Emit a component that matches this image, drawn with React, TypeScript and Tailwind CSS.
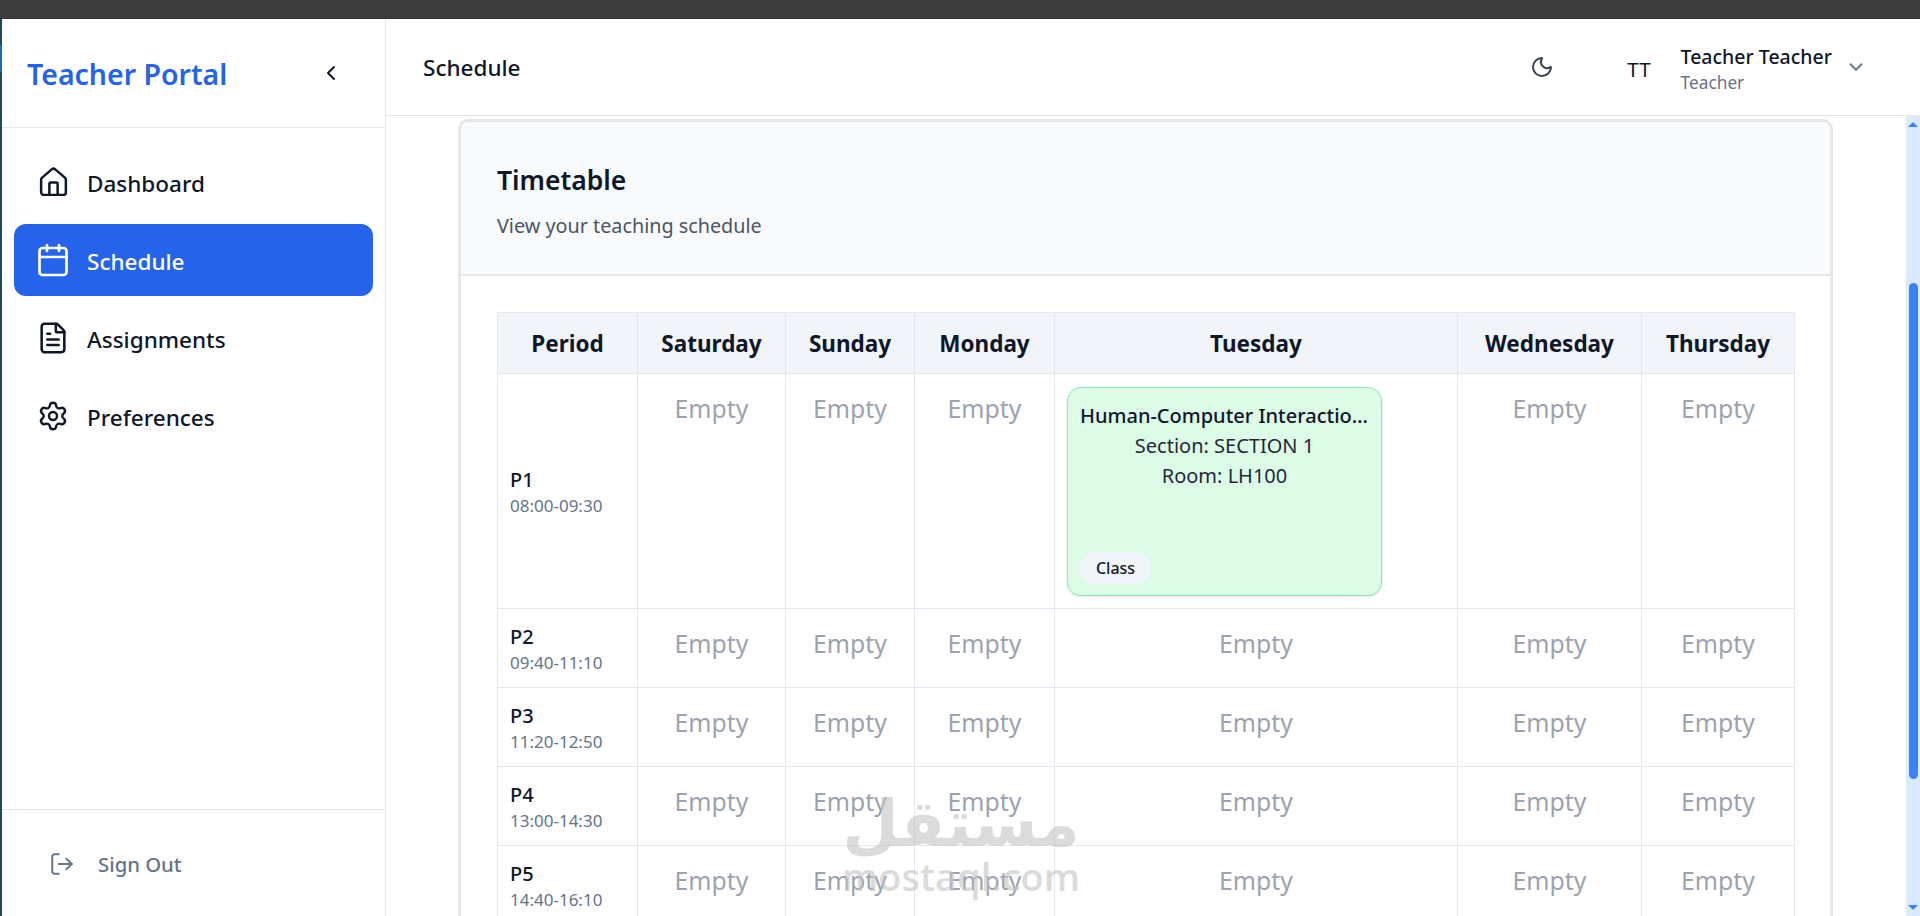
import { Calendar, ChevronDown, ChevronLeft, FileText, House, LogOut, Moon, Settings } from "lucide-react";

const days = ["Saturday", "Sunday", "Monday", "Tuesday", "Wednesday", "Thursday"];
const periods = [
  ["P2", "09:40-11:10"],
  ["P3", "11:20-12:50"],
  ["P4", "13:00-14:30"],
  ["P5", "14:40-16:10"],
  ["P6", "16:20-17:50"],
];
const nav = [
  { label: "Dashboard", Icon: House, size: 33 },
  { label: "Schedule", Icon: Calendar, size: 36, active: true },
  { label: "Assignments", Icon: FileText, size: 34 },
  { label: "Preferences", Icon: Settings, size: 32 },
];

function Empty() {
  return <div className="text-center text-[24.8px] leading-[32px] text-[#9ca3af]">Empty</div>;
}

function PeriodCell({ name, time }: { name: string; time: string }) {
  return (
    <td className="border border-[#e2e8f0] px-[12px] pt-[2px] align-middle">
      <div className="text-[20px] leading-[28px] font-medium text-[#0f172a]">{name}</div>
      <div className="text-[17px] leading-[24px] text-[#64748b]">{time}</div>
    </td>
  );
}

export default function App() {
  return (
    <div className="relative flex h-screen w-full flex-col overflow-hidden bg-white font-['Noto_Sans',sans-serif] text-[#0f172a]">
      <div className="h-[19px] shrink-0 border-b border-[#353535] bg-[#3c3c3c]" />
      <div className="flex min-h-0 flex-1">
        <div className="flex w-[2px] shrink-0 flex-col bg-[#1e4a5a]">
          <div className="mt-[26px] h-[27px] bg-[#1a6fb0]" />
        </div>
        <aside className="flex w-[384px] shrink-0 flex-col border-r border-[#e2e8f0]">
          <div className="flex h-[109px] shrink-0 items-center justify-between border-b border-[#e2e8f0] pr-[42px] pl-[25px]">
            <span className="pt-[3px] text-[28.5px] font-semibold text-[#2563eb]">Teacher Portal</span>
            <ChevronLeft size={24} strokeWidth={2} className="text-[#0f172a]" />
          </div>
          <nav className="flex flex-1 flex-col gap-[6px] px-[12px] pt-[18px]">
            {nav.map(({ label, Icon, size, active }) => (
              <div
                key={label}
                className={`flex h-[72px] items-center gap-[19px] rounded-[12px] pl-[24px] text-[22.5px] font-medium ${
                  active ? "bg-[#2563eb] text-white" : "text-[#0f172a]"
                }`}
              >
                <span className="flex w-[30px] shrink-0 justify-center">
                  <Icon size={size} strokeWidth={1.8} className="shrink-0" />
                </span>
                <span className="pt-[4px]">{label}</span>
              </div>
            ))}
          </nav>
          <div className="flex h-[107px] shrink-0 items-center gap-[23px] border-t border-[#e2e8f0] pt-[2px] pl-[47px] text-[20.3px] font-medium text-[#64748b]">
            <LogOut size={26} strokeWidth={1.8} />
            Sign Out
          </div>
        </aside>
        <main className="flex min-w-0 flex-1 flex-col">
          <header className="flex h-[97px] shrink-0 items-center border-b border-[#e2e8f0] pr-[53px] pl-[37px]">
            <h1 className="mt-[2px] text-[22.5px] font-medium text-[#0f172a]">Schedule</h1>
            <Moon size={24} strokeWidth={2} className="mr-[73px] ml-auto text-[#374151]" />
            <span className="mt-[4px] mr-[30px] text-[20.5px] text-[#0f172a]">TT</span>
            <div className="mt-[4px] mr-[13px] flex flex-col">
              <span className="text-[19.5px] leading-[28px] font-medium text-[#0f172a]">Teacher Teacher</span>
              <span className="text-[17.3px] leading-[24px] text-[#64748b]">Teacher</span>
            </div>
            <ChevronDown size={22} strokeWidth={2} className="text-[#64748b]" />
          </header>
          <div className="flex min-h-0 flex-1">
            <div className="min-w-0 flex-1 overflow-hidden pt-[3px] pr-[73px] pl-[72px]">
              <section className="rounded-[10px] border-[3px] border-[#e5e7eb] bg-white">
                <div className="h-[154px] rounded-t-[8px] border-b-2 border-[#e5e7eb] bg-[#f8fafc] px-[36px] pt-[38px]">
                  <h2 className="text-[26.5px] leading-[40px] font-semibold text-[#0f172a]">Timetable</h2>
                  <p className="mt-[12px] text-[19.8px] leading-[28px] text-[#4b5563]">View your teaching schedule</p>
                </div>
                <div className="px-[36px] pt-[36px]">
                  <table className="w-[1297px] table-fixed border-collapse">
                    <colgroup>
                      <col className="w-[140px]" />
                      <col className="w-[148px]" />
                      <col className="w-[129px]" />
                      <col className="w-[140px]" />
                      <col className="w-[403px]" />
                      <col className="w-[184px]" />
                      <col className="w-[153px]" />
                    </colgroup>
                    <thead>
                      <tr className="h-[61px] bg-[#f1f5f9]">
                        <th className="border border-[#e2e8f0] pt-[2px] text-center text-[22.5px] font-bold">Period</th>
                        {days.map((d) => (
                          <th key={d} className="border border-[#e2e8f0] pt-[2px] text-center text-[22.5px] font-bold">
                            {d}
                          </th>
                        ))}
                      </tr>
                    </thead>
                    <tbody>
                      <tr className="h-[235px]">
                        <PeriodCell name="P1" time="08:00-09:30" />
                        {days.map((d) =>
                          d === "Tuesday" ? (
                            <td key={d} className="border border-[#e2e8f0] px-[12px] align-middle">
                              <div className="flex h-[209px] w-[315px] flex-col rounded-[14px] border border-[#86efac] bg-[#dcfce7] px-[12px] pt-[13px] pb-[11px] shadow-sm">
                                <div className="truncate text-center text-[20px] leading-[30px] font-medium">Human-Computer Interaction Fundamentals</div>
                                <div className="text-center text-[20px] leading-[30px] text-[#1f2937]">Section: SECTION 1</div>
                                <div className="text-center text-[20px] leading-[30px] text-[#1f2937]">Room: LH100</div>
                                <span className="mt-auto flex h-[32px] w-[71px] items-center justify-center rounded-full bg-[#f1f5f9] text-[16px] font-medium">Class</span>
                              </div>
                            </td>
                          ) : (
                            <td key={d} className="border border-[#e2e8f0] px-[12px] pt-[18px] align-top">
                              <Empty />
                            </td>
                          ),
                        )}
                      </tr>
                      {periods.map(([name, time]) => (
                        <tr key={name} className="h-[79px]">
                          <PeriodCell name={name} time={time} />
                          {days.map((d) => (
                            <td key={d} className="border border-[#e2e8f0] px-[12px] pt-[18px] align-top">
                              <Empty />
                            </td>
                          ))}
                        </tr>
                      ))}
                    </tbody>
                  </table>
                </div>
              </section>
            </div>
            <div className="flex w-[14px] shrink-0 flex-col items-center bg-[#dbeafe] py-[6px]">
              <div className="h-0 w-0 border-x-[5px] border-b-[5px] border-x-transparent border-b-[#3b82f6]" />
              <div className="mt-[156px] h-[496px] w-[9px] rounded-full bg-[#3b82f6]" />
              <div className="mt-auto h-0 w-0 border-x-[5px] border-t-[5px] border-x-transparent border-t-[#3b82f6]" />
            </div>
          </div>
        </main>
      </div>
      <div className="pointer-events-none absolute top-[786px] left-[845px] flex w-[232px] flex-col items-center text-[#c4c4c4] opacity-60">
        <span className="font-['DejaVu_Sans',sans-serif] text-[65px] leading-[76px] font-bold">مستقل</span>
        <span className="-mt-[6px] font-['Open_Sans',sans-serif] text-[38px] leading-[40px] font-semibold">mostaql.com</span>
      </div>
    </div>
  );
}
